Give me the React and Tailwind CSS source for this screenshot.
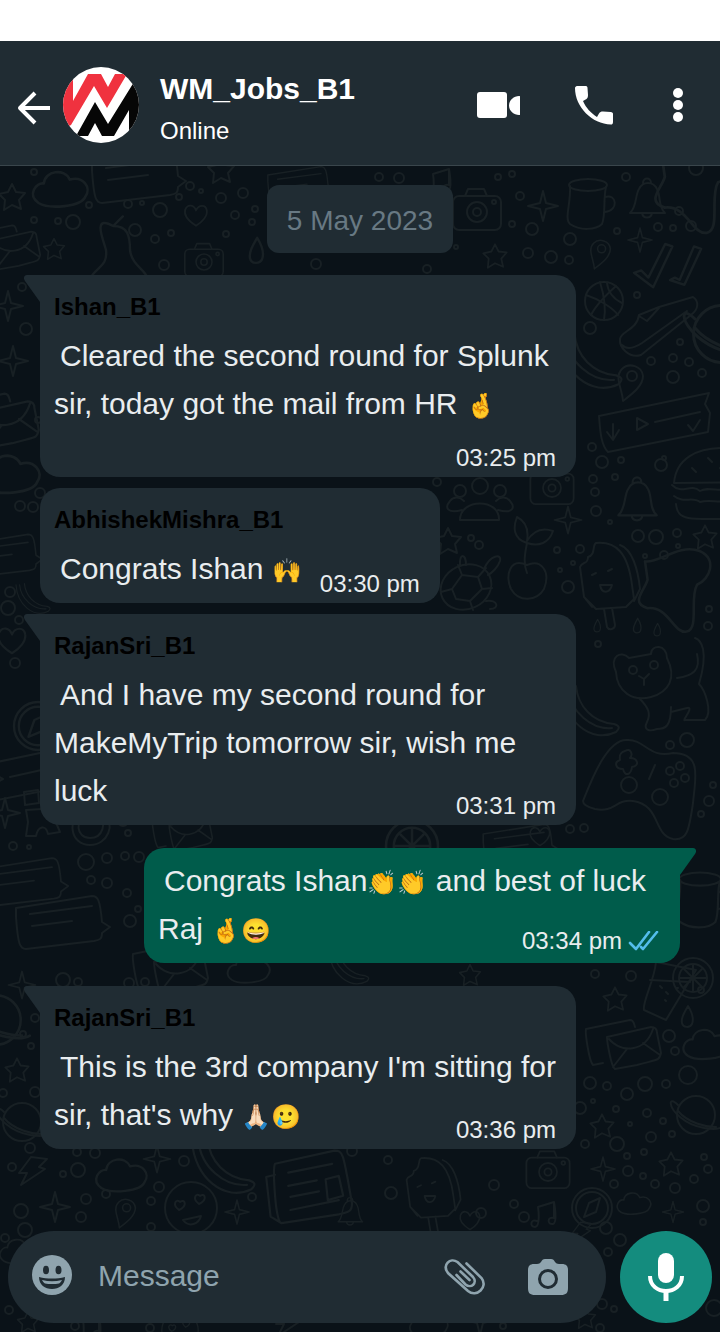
import React from "react";

/* ---------- wallpaper ---------- */

const shapes = {
  star5: <path d="M0-13 4-5 13-4 7 3 9 12 0 8-8 13-7 3-13-3-4-5Z" />,
  star4: <path d="M0-15 3-3 15 0 3 3 0 15-3 3-15 0-3-3Z" />,
  cloud: <path d="M-18 10c-9-6-2-16 4-15 1-10 16-12 20-3 10-3 17 6 12 13-3 8-28 10-36 5Z" />,
  heart: <path d="M0 12C-8 7-14 1-12-6-9-13-2-11 0-5 3-12 11-12 12-5 13 1 7 8 0 12Z" />,
  drop: <path d="M1-11C6-3 7 2 5 7 3 11-4 11-5 6-6 1-3-4 1-11Z" />,
  bell: <path d="M-17 14C-10 8-12-4-8-10-4-18 6-18 10-10 14-3 11 8 18 14ZM-4-16c0-6 8-6 8 0M-5 14c1 6 9 6 10 0" />,
  camera: (
    <>
      <rect x="-24" y="-16" width="48" height="34" rx="6" />
      <path d="M-12-16l3-7H7l3 7" />
      <circle r="10" />
      <circle r="4" />
      <circle cx="17" cy="-10" r="2" />
    </>
  ),
  mug: (
    <>
      <ellipse cy="-19" rx="19" ry="6" />
      <path d="M-18-18C-17 0-24 15-18 20-8 27 8 26 14 20 18 10 15-5 18-17M17-7c12-4 14 14 0 15" />
    </>
  ),
  ball: (
    <>
      <circle r="19" />
      <path d="M-18-6C-6-2 8 6 14 14M-4-19C0-6 2 8 0 19M12-15C2-6-8 4-13 14M18 2C10-2 4-8 3-18" />
    </>
  ),
  shoe: <path d="M-35 9C-34 1-18 0-16-15l20-8 34-10c6 4 6 12-2 18L-14 25c-12 4-22-8-21-16Zm2 6c6 6 14 2 20-2l45-32M-16-14l8 5 12-13" />,
  pin: (
    <>
      <path d="M-7 21C-8 8-16-3-8-11-1-18 12-14 13-4 13 6 2 14-7 21Z" />
      <circle cx="2" cy="-4" r="5" />
    </>
  ),
  ticket: <path d="M-56-4 54-27l-4 11 5 9-2 19L-47 32c-8-8-8-26-9-36ZM-18-2v12l11-6ZM0 2l45-10M-42 4v14m-6-6 6 8 6-10M33 5l5 6 7-11" />,
  burger: <path d="M-24 1C-22-24 0-34 24-34c20 0 34 14 36 34ZM-26 3c10 10 18-2 28 6 10-6 20 4 58-4M-24 14c10 8 18 0 26 6 12-4 20 4 56-4M-22 22c2 18 12 16 78 14M-6-14l4 4m12-14 4 4m8 6 4 4" />,
  people: (
    <>
      <circle cy="-14" r="8" />
      <circle cx="-20" cy="-9" r="6" />
      <circle cx="20" cy="-9" r="6" />
      <path d="M-20 20C-20-2 20-2 19 20ZM-18 10c-14 4-18-2-12-9 4-5 10-4 14 0M18 10c14 4 18-2 12-9-4-5-10-4-14 0" />
    </>
  ),
  apple: <path d="M0 0C-18-8-22 12-16 24-8 38 10 36 17 24 24 6 14-6 0 0Zm0 8C-4-2-2-12 0-22-14-26-14-38-10-48-2-44 2-36 0-24 6-34 14-38 26-34 22-22 12-18 0-22" />,
  turtle: (
    <>
      <ellipse rx="26" ry="22" transform="rotate(-25)" />
      <path d="M-14 2-4-12 12-10 16 2 4 14-10 12ZM-14 2l-11 3M-4-12l-4-10M12-10l8-9M16 2l10-1M4 14l3 9M18-18C24-32 36-34 34-26 32-20 26-14 22-12M-6-22c-1-12 6-12 6 0M20 14c12-2 14 8 4 8" />
    </>
  ),
  popsicle: <path d="M-22 22-26-8c2-6 8-2 8-10 8-2 4-12 8-14C10-34 22-22 26 10l2 14-8 8-30 2ZM-14 32-22 22M14-30c12 4 18 24 20 44l-6 12M-2 34l3 18c2 4 8 2 8-2L6 33M-14 0l4-2m12-2 4-2M-6 10c2 10 10 8 12 0Z" />,
  cat: (
    <>
      <path d="M-31-12C-38-28-26-34-18-26L4-30C4-40 20-40 20-26 30-6 22 8 4 13-14 18-30 8-31-12Z" />
      <path d="M-8 14C2 24 4 30 0 38c-4 8 2 10 10 7 8 0 14-2 14-22M24 28l16-4c8-2-6 14-2 12l20 0c8-8 0-30-6-36C62-34 54-44 48-46M30-6C46-8 54-14 50-30" />
      <circle cx="-14" cy="-14" r="4" />
      <circle cx="7" cy="-19" r="4" />
      <path d="M-8-8l5 3 5-5m-5 5v6" />
    </>
  ),
  gamepad: (
    <>
      <path d="M-54 28C-46 8-30-34-10-33 8-34 12-14 36-20 66-20 58 6 56 30 52 58 50 68 36 66 16 62 24 32-4 28-22 26-22 40-42 36-50 34-54 32-54 28Z" />
      <path d="M-12-22c6-4 8 4 5 7 8 0 10 8 2 9-1 8-7 10-9 2-8 0-9-7-3-9-1-6 1-8 5-9ZM12 6l6-14" />
      <circle cx="-8" cy="12" r="8" />
      <circle cx="23" cy="24" r="8" />
      <circle cx="33" cy="-2" r="4" />
      <circle cx="43" cy="-7" r="4" />
      <circle cx="37" cy="10" r="4" />
      <circle cx="48" cy="5" r="4" />
    </>
  ),
  splash: <path d="M-30-22C-20-20-4-36 12-30 26-24 20-8 10-4 4 6 12 30 2 32-8 34-12 12-28 14-42 10-30 0-28-8Z" />,
  mail: <path d="M-26-16 18-26c4 0 6 2 6 6l4 20c-2 8-2 6-24 12l-22 4c-4-2-8-28-8-32ZM-24-14C-12 0 12 0 20-24M-20 14l14-18M27 2 10-10M-30 10l-10 2c-4-4-8-32-7-36l44-9c4 0 4 4 5 7" />,
  drink: <path d="M-12-34C-14-14-26 6-24 14l22 10 30-50ZM-18-16l40 2M-8-10l2 2m4 4 2 2m8-6 2 0M-3 4l1 1" />,
  lemon: (
    <>
      <circle r="20" />
      <circle r="14" />
      <path d="M0-13V13M-13 0H13M-9-9 9 9M-9 9 9-9" />
    </>
  ),
  saturn: (
    <>
      <circle r="19" />
      <path d="M-18-10C-28-20-28-8-16 2-2 14 20 16 26 12M-18-4C-8 8 10 12 20 12" />
    </>
  ),
  compass: (
    <>
      <circle r="20" />
      <circle r="16" />
      <path d="M-8 9-3-5 8-10 4 4Z" />
    </>
  ),
  note: <path d="M-8 8c-6-3-8 6-2 6 6-1 3-20 3-20l16-5v16c-7-2-7 7-1 6 5-1 1-22 1-22" />,
  chat: <path d="M-46-10 30-22c6 0 8 4 10 26l8 5-8 6c0 6-2 7-8 8l-68 8c-6 0-8-4-10-32ZM-32-4l62-8M-30 8l40-5" />,
  paper: <path d="M-30-22 24-34c8 0 8 2 16 48 0 8-4 8-12 10l-52 8c-6 0-8-50-6-54ZM-30-12l-8 2 4 36 10 6M-18-14l40-8M-18-2l26-5M-16 8l26-5M16-8l12-3 4 18-14 4ZM-16 20l44-9" />,
  banana: <path d="M-30-22C-28 12 0 34 24 22c4-4 4-6-2-8C0 12-14-4-16-24M-24-22C-22 2 0 20 20 18" />,
  arrow: <path d="M-6-16l-2-8 14 4-4 14-4-5C-16-6-14 13 0 13 14 13 16-4 10-9l4-4C26-1 18 20 0 20-20 20-24-6-6-16Z" />,
  puzzle: <path d="M-16 0 16-2 12 8 18 22 6 24C4 14-4 16-6 26h-10l2-14ZM-18-18l14-2 1 13-14 2ZM10-14l12-2 1 12-9 2" />,
  bolt: <path d="M-2-14 14-12 6-4l6 2L-12 14-6 2h-8Z" />,
  pear: <path d="M4-28l-8 8C-22-30-12-8-10 0c2 16-12 14-14 28-2 14 30 18 44 6 14-16-8-16-10-34C10-12 8-20-4-20Z" />,
  checks: <path d="M-30 4l6-2 6 6L-4-20l6 2-16 34ZM0 10l4-2 4 2L20-18l6 2-14 30Z" />,
  smile: (
    <>
      <circle r="26" />
      <path d="M-12 2c-8-6-2-12 1-8 5-4 8 4-1 8ZM8-4c-8-6-2-12 1-8 5-4 8 4-1 8ZM-8 12c6 8 16 4 18-4Z" />
    </>
  ),
};

const doodles = [
  ["star5", 12, 197], ["cloud", 62, 190, 1.3], ["chat", 138, 172, 1], ["star5", 221, 170], ["heart", 196, 215, 0.9],
  ["pear", 118, 250, 1.2], ["star5", 54, 249, 0.8], ["mail", 15, 255, 0.9], ["camera", 204, 262, 0.8], ["drop", 256, 251, 1.2],
  ["chat", 300, 182, 0.7], ["note", 440, 180], ["camera", 477, 212], ["star4", 543, 206], ["mug", 588, 204],
  ["bell", 647, 199], ["star4", 640, 240, 0.8], ["pin", 600, 252, 0.8], ["star5", 495, 256, 0.9], ["splash", 704, 188, 1.4],
  ["checks", 670, 268, 1.2], ["ball", 604, 301], ["shoe", 655, 330], ["saturn", 722, 334, 1.5], ["pin", 630, 380],
  ["banana", 592, 360, 1.1], ["ticket", 655, 420], ["burger", 698, 482], ["people", 480, 500], ["camera", 552, 488, 0.9],
  ["bell", 637, 500, 1.1], ["star4", 568, 520, 0.9], ["star5", 705, 537, 0.9], ["apple", 527, 565], ["turtle", 466, 587],
  ["popsicle", 606, 575], ["splash", 684, 590, 1.3], ["cat", 647, 684], ["gamepad", 637, 773], ["banana", 592, 710, 1],
  ["lemon", 412, 846, 1.3], ["drop", 597, 626, 0.6], ["drop", 637, 626, 0.7], ["drop", 657, 630, 0.6], ["star5", 448, 541],
  ["star4", 8, 306], ["star4", 13, 361], ["mail", 8, 430, 1.1], ["cloud", 12, 475, 1.4], ["chat", 4, 552, 0.8], ["banana", 34, 598, 0.6],
  ["heart", 12, 640, 1.1], ["compass", 38, 726, 1.2], ["ticket", 10, 775, 1], ["puzzle", 42, 810], ["arrow", 90, 825], ["star4", 5, 813],
  ["chat", 25, 878, 0.9], ["chat", 62, 918], ["cloud", 150, 802, 1.2], ["saturn", -4, 1020, 1.3], ["star4", 22, 985, 0.9],
  ["star5", 17, 1070, 0.9], ["saturn", 22, 1122], ["bolt", 33, 1171], ["cloud", 123, 1176, 1.2], ["star4", 157, 1159, 0.9],
  ["banana", 225, 1165, 1.1], ["paper", 308, 1188, 1.1], ["smile", 191, 1208], ["pin", 125, 1211, 0.8], ["star4", 55, 1207, 1],
  ["star4", 237, 1212, 0.8], ["popsicle", 430, 1187, 0.9], ["camera", 548, 1172, 0.9], ["star4", 603, 1169, 0.8],
  ["compass", 592, 1208], ["cloud", 635, 1204, 0.8], ["star5", 671, 1164, 0.9], ["star4", 673, 1212, 0.7], ["star5", 602, 1126, 0.9],
  ["saturn", 696, 1115], ["mail", 633, 1053], ["drink", 668, 996], ["lemon", 693, 978], ["drop", 687, 1017], ["cloud", 708, 1045, 1.1],
  ["star5", 615, 999, 0.9], ["note", 545, 1213], ["bolt", 582, 1232, 0.7], ["star5", 28, 1322, 0.8], ["mug", 700, 900, 1.1], ["heart", 540, 836, 0.8],
  ["mail", 190, 838, 0.8], ["chat", 520, 842, 0.8], ["cloud", 250, 970], ["mail", 180, 978], ["banana", 350, 966, 0.7], ["star5", 470, 975, 0.8],
  ["cloud", 20, 1252, 0.9], ["bell", 350, 1212, 0.7], ["heart", 470, 1220, 0.8], ["smile", 180, 1330, 0.7], ["bolt", 290, 1322], ["star4", 480, 1320],
  ["cloud", 430, 1325, 0.9], ["star5", 585, 1318, 0.8], ["note", 90, 1326],
];

const rings = [
  [34, 172, 3], [34, 220, 3], [58, 221, 3], [73, 222, 7], [89, 205, 3], [128, 204, 4], [142, 203, 2], [160, 210, 7], [179, 197, 3],
  [190, 186, 4], [201, 191, 2], [221, 198, 5], [243, 193, 5], [235, 215, 4], [255, 209, 3], [252, 222, 3], [135, 230, 6], [155, 239, 4],
  [171, 233, 3], [226, 234, 3], [164, 265, 5], [316, 264, 5], [379, 177, 4], [399, 178, 5], [498, 177, 3], [512, 174, 3], [520, 196, 4],
  [512, 224, 3], [532, 229, 6], [570, 239, 6], [528, 253, 5], [551, 257, 6], [569, 260, 4], [626, 177, 4], [679, 211, 4], [658, 227, 4],
  [673, 228, 3], [691, 226, 5], [617, 231, 3], [696, 168, 7], [456, 247, 2], [22, 287, 4], [26, 329, 6], [38, 420, 3], [427, 269, 4],
  [637, 295, 3], [590, 328, 6], [651, 361, 4], [673, 358, 4], [689, 362, 4], [673, 377, 6], [702, 373, 4], [680, 342, 3], [592, 447, 4],
  [602, 462, 6], [621, 460, 3], [664, 458, 2], [661, 465, 6], [593, 479, 4], [595, 492, 4], [596, 511, 5], [615, 477, 3], [610, 522, 2],
  [638, 536, 6], [656, 537, 7], [677, 533, 4], [678, 546, 2], [645, 556, 2], [664, 555, 4], [580, 549, 4], [557, 550, 3], [573, 563, 2],
  [560, 570, 2], [568, 587, 6], [471, 538, 3], [479, 545, 4], [437, 482, 4], [598, 644, 3], [709, 609, 3], [708, 626, 4], [670, 745, 4],
  [687, 740, 7], [713, 785, 3], [709, 801, 5], [701, 814, 3], [584, 828, 4], [570, 829, 4], [20, 506, 5], [33, 507, 5], [40, 493, 5],
  [10, 592, 5], [8, 608, 7], [19, 620, 4], [15, 663, 5], [13, 846, 4], [29, 847, 2], [123, 821, 5], [128, 833, 3], [86, 862, 8],
  [107, 858, 5], [125, 856, 4], [139, 857, 5], [91, 880, 4], [107, 883, 5], [127, 893, 4], [138, 909, 3], [130, 921, 6], [63, 980, 7],
  [78, 982, 4], [129, 983, 5], [145, 982, 4], [35, 1018, 4], [23, 1034, 3], [31, 1046, 3], [35, 1092, 5], [3, 1093, 4], [30, 1148, 5],
  [12, 1167, 4], [78, 1170, 7], [63, 1174, 3], [77, 1152, 4], [95, 1153, 5], [184, 1161, 5], [159, 1187, 5], [106, 1194, 4], [86, 1199, 5],
  [151, 1201, 4], [21, 1211, 7], [81, 1217, 5], [252, 1197, 4], [352, 1151, 5], [388, 1160, 4], [391, 1193, 6], [25, 1230, 7], [5, 1238, 4],
  [151, 1227, 4], [481, 1213, 5], [494, 1185, 5], [514, 1204, 4], [524, 1217, 5], [595, 974, 4], [631, 976, 5], [669, 1036, 6], [675, 1051, 4],
  [688, 1075, 9], [645, 1084, 7], [666, 1084, 4], [590, 1083, 6], [607, 1086, 4], [627, 1094, 6], [593, 1101, 2], [580, 1108, 6],
  [616, 1109, 3], [647, 1113, 4], [663, 1121, 3], [630, 1124, 2], [651, 1137, 5], [672, 1134, 3], [585, 1144, 4], [617, 1144, 7],
  [644, 1152, 3], [627, 1156, 3], [628, 1171, 5], [643, 1176, 3], [614, 1184, 4], [655, 1184, 4], [675, 1188, 5], [694, 1179, 4],
  [704, 1157, 3], [708, 1169, 4], [703, 1206, 6], [606, 1228, 6], [620, 1240, 6], [608, 1252, 4], [703, 1222, 3], [602, 1304, 5],
  [614, 1309, 3], [714, 1308, 8], [9, 1310, 4], [75, 1326, 4], [503, 1326, 3], [150, 1328, 4], [600, 1328, 4], [701, 990, 3],
];

function Wallpaper() {
  return (
    <svg
      className="absolute inset-0 -z-10 h-full w-full"
      viewBox="0 166 720 1166"
      preserveAspectRatio="xMidYMin slice"
      fill="none"
      stroke="#182024"
      strokeWidth="2"
      strokeLinecap="round"
      strokeLinejoin="round"
      aria-hidden="true"
    >
      {doodles.map(([name, x, y, s = 1], i) => (
        <g key={i} transform={`translate(${x} ${y}) scale(${s})`}>
          {shapes[name]}
        </g>
      ))}
      {rings.map(([x, y, r], i) => (
        <circle key={i} cx={x} cy={y} r={r} />
      ))}
    </svg>
  );
}

/* ---------- icons ---------- */

const BackIcon = () => (
  <svg className="h-9 w-9" viewBox="0 0 36 36" fill="none" stroke="#fff" strokeWidth="4" strokeLinejoin="round">
    <path d="M34 18H4M19 3 4 18l15 15" />
  </svg>
);

const VideoIcon = () => (
  <svg className="h-7 w-11" viewBox="0 0 44 28" fill="#fff">
    <rect x="1" y="1" width="30" height="26" rx="3" />
    <path d="M43 5c1 0 1 0 1 1v17c0 1 0 1-1 1-5 0-10-4-10-9.500S38 5 43 5Z" />
  </svg>
);

const PhoneIcon = () => (
  <svg className="h-10 w-10" viewBox="0 0 40 40" fill="#fff">
    <path d="M3 1h9c1 0 1.500 1 1.500 2l.5 7c0 2-.5 3-1.500 4L9 16c3 7 8 12 14 16l2-3.500c1-1.500 2-2 4-2l7.500.5c2 0 2.500 1 2.500 2v8c0 2-1 2.500-2 2.500C18 39 1 22 1 3c0-1 1-2 2-2Z" />
  </svg>
);

const MoreIcon = () => (
  <svg className="h-9 w-3" viewBox="0 0 12 36" fill="#fff">
    <circle cx="6" cy="6" r="5" />
    <circle cx="6" cy="18" r="5" />
    <circle cx="6" cy="30" r="5" />
  </svg>
);

const Avatar = () => (
  <svg className="h-[76px] w-[76px] rounded-full" viewBox="0 0 76 76" role="img" aria-label="WM_Jobs_B1">
    <rect width="76" height="76" fill="#fff" />
    <path fill="#f0323f" d="M0 13 10 10V34L25 7H38L45 20 52 7H64L44 41 31 19 8 58 0 62Z" />
    <path fill="#060606" d="M32 35 45 57 71 15 76 20V60L66 65V43L51 69H39L32 56 25 69H13Z" />
  </svg>
);

const SmileIcon = () => (
  <svg className="h-10 w-10" viewBox="0 0 40 40">
    <circle cx="20" cy="20" r="20" fill="#8fa4ae" />
    <g fill="#202c33">
      <ellipse cx="14" cy="15" rx="3" ry="4.3" />
      <ellipse cx="26.5" cy="15" rx="3" ry="4.3" />
      <path d="M7 22c8 2 18 2 26 0 0 8-6 12-13 12S7 30 7 22Z" />
    </g>
    <path d="M10 25c7 1.600 13 1.600 20 0-1 2-2 3-3 3.500-4 .8-10 .8-14 0-1-.5-2-1.500-3-3.500Z" fill="#8fa4ae" />
  </svg>
);

const ClipIcon = () => (
  <svg className="h-10 w-[42px]" viewBox="0 0 42 40" fill="none" stroke="#8fa4ae" strokeWidth="2.6" strokeLinecap="round">
    <path d="M22.500 5.500 37.500 20c7 9-5 20-13.500 13L4 15C-2 7 6-1 13.500 4L29 19c5 6-2 12-7.500 7.500L12.500 17" transform="translate(0 1)" />
    <path d="M16.500 14.500 25.500 23" />
  </svg>
);

const CameraIcon = () => (
  <svg className="h-9 w-10" viewBox="0 0 40 36">
    <path
      fill="#8fa4ae"
      d="M6 5h3c2 0 3-1 4-2 1-2 2-3 4-3h6c2 0 3 1 4 3 1 1 2 2 4 2h3c4 0 6 2 6 6v18c0 5-2 7-7 7H7c-5 0-7-2-7-7V11c0-4 2-6 6-6Z"
    />
    <circle cx="20" cy="20" r="8.5" fill="#8fa4ae" stroke="#202c33" strokeWidth="3" />
  </svg>
);

const MicIcon = () => (
  <svg className="h-12 w-9" viewBox="0 0 36 48" fill="none">
    <rect x="10" width="16" height="30" rx="8" fill="#fff" />
    <path d="M2 23C2 43 34 43 34 23" stroke="#fff" strokeWidth="4" />
    <path d="M18 38v10" stroke="#fff" strokeWidth="5" />
  </svg>
);

const ReadTicks = () => (
  <svg className="h-5 w-8" viewBox="0 0 32 20" fill="none" stroke="#53bdeb" strokeWidth="2.6">
    <path d="M2 12l6 6L21 1M13 16l2 2L29 1" strokeLinecap="round" strokeLinejoin="round" />
  </svg>
);

const Tail = ({ own }) =>
  own ? (
    <svg className="absolute left-full top-0 h-7 w-4" viewBox="0 0 16 28" fill="#005c4b" aria-hidden="true">
      <path d="M0 0h13c3 0 4 3 2 6L0 27Z" />
    </svg>
  ) : (
    <svg className="absolute right-full top-0 h-7 w-4" viewBox="0 0 16 28" fill="#202c33" aria-hidden="true">
      <path d="M16 0H3C0 0-1 3 1 6l15 21Z" />
    </svg>
  );

/* ---------- messages ---------- */

const Emoji = ({ children }) => (
  <span className="inline-block w-[30px] whitespace-nowrap text-center indent-0 align-baseline text-[24px] leading-none">{children}</span>
);

function Message({ author, time, own, tail, compact, roomy, children }) {
  const side = own ? "ml-auto mr-10 rounded-tr-none bg-[#005c4b] pt-[9px]" : "ml-10 bg-[#202c33] pt-[14px]";
  const corner = tail && !own ? "rounded-tl-none" : "";
  const width = compact ? "w-fit" : "w-[536px] max-w-4/5";
  return (
    <article className={`relative rounded-[20px] pb-[10px] pl-[14px] pr-5 text-[#e9edef] ${side} ${corner} ${width}`}>
      {tail && <Tail own={own} />}
      {author && <h2 className="mb-[7px] text-[24px] font-bold leading-9 text-black">{author}</h2>}
      <div className={compact ? "flex items-end gap-[26px]" : "grid"}>
        <p className={`col-start-1 row-start-1 -mr-2 indent-[6px] text-[30px] leading-[48px] ${roomy ? "pb-[39px]" : ""}`}>{children}</p>
        <div
          className={`col-start-1 row-start-1 flex items-center gap-1.5 self-end justify-self-end text-[24px] leading-7 ${
            own ? "-mb-0.5" : "-mb-[5px]"
          }`}
        >
          <time>{time}</time>
          {own && <ReadTicks />}
        </div>
      </div>
    </article>
  );
}

export default function App() {
  return (
    <div className="flex min-h-screen flex-col bg-white pt-[41px] font-['Liberation_Sans',Arial,sans-serif]">
      <header className="flex h-[125px] items-center border-b border-[#3a464c] bg-[#202c33] pl-4 pr-9 pt-1 text-white">
        <button aria-label="Back" className="mr-[11px] mt-1.5">
          <BackIcon />
        </button>
        <Avatar />
        <div className="ml-[21px] flex-1 pt-2">
          <h1 className="text-[30px] font-bold leading-10">WM_Jobs_B1</h1>
          <p className="pt-1 text-[24px] leading-9">Online</p>
        </div>
        <button aria-label="Video call" className="mr-[54px]">
          <VideoIcon />
        </button>
        <button aria-label="Voice call" className="mr-[58px]">
          <PhoneIcon />
        </button>
        <button aria-label="More options">
          <MoreIcon />
        </button>
      </header>

      <main className="relative isolate flex flex-1 flex-col overflow-hidden bg-[#0a1218]">
        <Wallpaper />
        <p className="mx-auto mt-[19px] rounded-xl bg-[#202c33] px-5 pb-3 pt-4 text-[28px] leading-10 text-[#687983]">5 May 2023</p>

        <section aria-label="Messages" className="mt-[22px] flex flex-1 flex-col gap-[11px]">
          <Message author="Ishan_B1" time="03:25 pm" tail roomy>
            Cleared the second round for Splunk sir, today got the mail from HR <Emoji>🤞</Emoji>
          </Message>
          <Message author="AbhishekMishra_B1" time="03:30 pm" compact>
            Congrats Ishan <Emoji>🙌</Emoji>
          </Message>
          <Message author="RajanSri_B1" time="03:31 pm" tail>
            And I have my second round for MakeMyTrip tomorrow sir, wish me luck
          </Message>
          <div className="py-3">
            <Message own time="03:34 pm" tail>
              Congrats Ishan<Emoji>👏</Emoji>
              <Emoji>👏</Emoji> and best of luck Raj <Emoji>🤞</Emoji>
              <Emoji>😄</Emoji>
            </Message>
          </div>
          <Message author="RajanSri_B1" time="03:36 pm" tail>
            This is the 3rd company I'm sitting for sir, that's why <Emoji>🙏🏻</Emoji>
            <Emoji>🥲</Emoji>
          </Message>
        </section>

        <form className="flex gap-3.5 px-2 pb-[9px] pt-10" onSubmit={(e) => e.preventDefault()}>
          <div className="flex h-[92px] min-w-0 flex-1 items-center rounded-full bg-[#202c33] pl-6 pr-[38px]">
            <button type="button" aria-label="Emoji" className="-mt-1">
              <SmileIcon />
            </button>
            <input
              type="text"
              aria-label="Message"
              placeholder="Message"
              className="ml-[26px] min-w-0 flex-1 bg-transparent pb-1 text-[30px] text-[#e9edef] outline-none placeholder:text-[#8fa4ae]"
            />
            <button type="button" aria-label="Attach" className="mr-[42px]">
              <ClipIcon />
            </button>
            <button type="button" aria-label="Camera">
              <CameraIcon />
            </button>
          </div>
          <button type="button" aria-label="Record voice message" className="flex h-[92px] w-[92px] items-center justify-center rounded-full bg-[#148c7e]">
            <MicIcon />
          </button>
        </form>
      </main>
    </div>
  );
}
